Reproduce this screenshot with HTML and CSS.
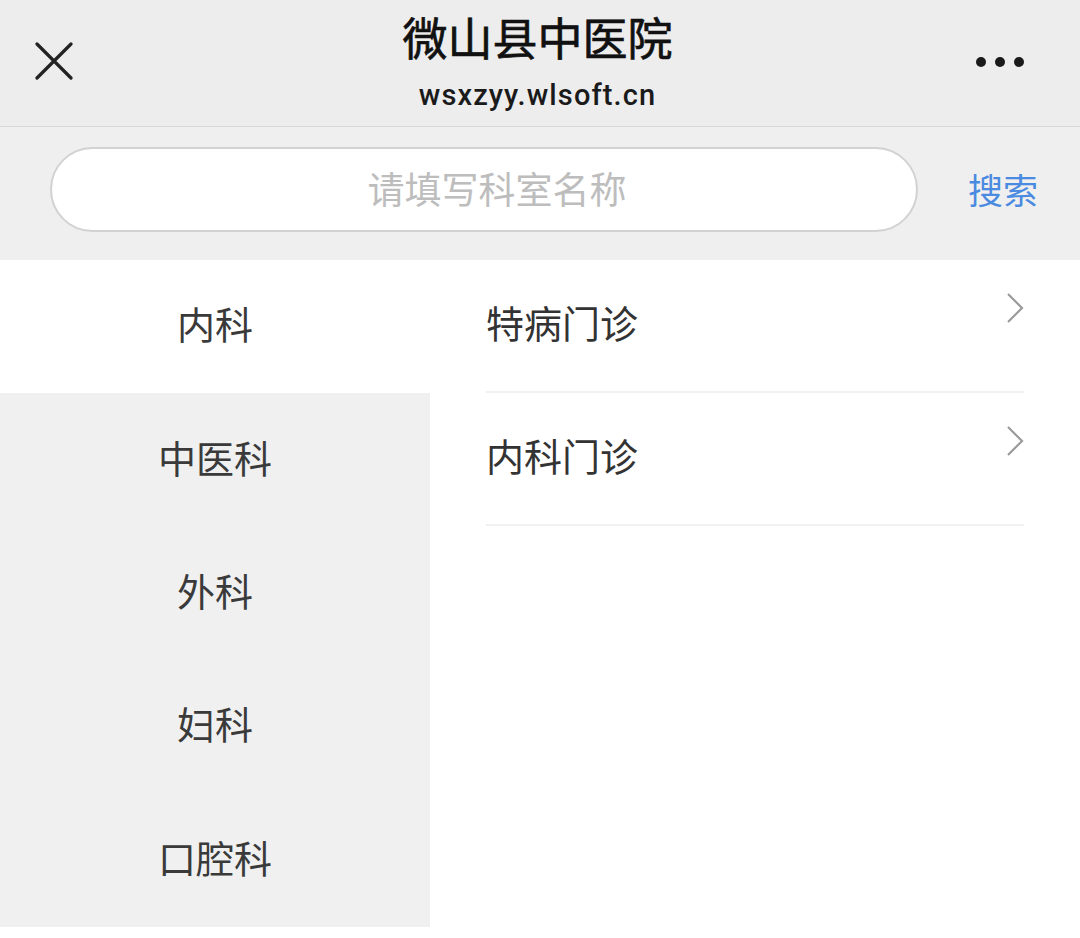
FILE: index.html
```html
<!DOCTYPE html>
<html lang="zh-CN">
<head>
<meta charset="utf-8">
<title>微山县中医院</title>
<link rel="stylesheet" href="styles.css">
</head>
<body>
<div class="page">
  <header class="topbar">
    <div class="close">
      <svg width="38" height="38" viewBox="0 0 38 38"><path d="M2 2 L36 36 M36 2 L2 36" stroke="#222" stroke-width="3.2" fill="none" stroke-linecap="round"/></svg>
    </div>
    <div class="titles">
      <div class="title">微山县中医院</div>
      <div class="subtitle">wsxzyy.wlsoft.cn</div>
    </div>
    <div class="more"><span class="dot"></span><span class="dot"></span><span class="dot"></span></div>
  </header>

  <div class="searchbar">
    <div class="searchbox"><span class="placeholder">请填写科室名称</span></div>
    <div class="searchbtn">搜索</div>
  </div>

  <div class="content">
    <ul class="depts">
      <li class="dept active">内科</li>
      <li class="dept">中医科</li>
      <li class="dept">外科</li>
      <li class="dept">妇科</li>
      <li class="dept">口腔科</li>
    </ul>
    <ul class="clinics">
      <li class="clinic"><span class="name">特病门诊</span><svg class="chev" width="18" height="32" viewBox="0 0 18 32"><path d="M2 2 L16 16 L2 30" stroke="#9a9a9a" stroke-width="2.2" fill="none"/></svg></li>
      <li class="clinic"><span class="name">内科门诊</span><svg class="chev" width="18" height="32" viewBox="0 0 18 32"><path d="M2 2 L16 16 L2 30" stroke="#9a9a9a" stroke-width="2.2" fill="none"/></svg></li>
    </ul>
  </div>
</div>
</body>
</html>
```

FILE: styles.css
```css
* { box-sizing: border-box; }
html, body { margin: 0; padding: 0; background: #ffffff; }
body {
  font-family: Roboto, "Noto Sans CJK SC", "Noto Sans", sans-serif;
  color: #333;
  width: 1080px;
  height: 938px;
  overflow: hidden;
}
ul { list-style: none; margin: 0; padding: 0; }

.topbar {
  height: 127px;
  background: #ededed;
  border-bottom: 1px solid #d8d8d8;
  display: flex;
  align-items: flex-start;
  justify-content: space-between;
  padding: 0 56px 0 35px;
}
.close { margin-top: 42px; width: 38px; height: 38px; }
.close svg { display: block; }
.titles {
  display: flex;
  flex-direction: column;
  align-items: center;
  padding-top: 10px;
  margin-left: 26px;
}
.title {
  font-family: "Noto Sans CJK SC", sans-serif;
  font-size: 45px;
  line-height: 54px;
  font-weight: 400;
  color: #111;
  -webkit-text-stroke: 0.7px #111;
}
.subtitle {
  margin-top: 14px;
  font-family: Roboto, "Noto Sans", sans-serif;
  font-size: 29px;
  line-height: 34px;
  font-weight: 500;
  color: #1a1a1a;
  letter-spacing: 1.1px;
}
.more {
  margin-top: 57px;
  display: flex;
  gap: 9px;
}
.dot { width: 10px; height: 10px; border-radius: 50%; background: #1a1a1a; display: block; }

.searchbar {
  height: 133px;
  background: #efefef;
  display: flex;
  align-items: flex-start;
  padding: 20px 0 0 50px;
}
.searchbox {
  width: 868px;
  height: 85px;
  background: #fff;
  border: 2px solid #d2d2d2;
  border-radius: 43px;
  display: flex;
  align-items: center;
  justify-content: center;
  padding: 0 0 4px 26px;
}
.placeholder {
  font-family: "Noto Sans CJK SC", sans-serif;
  font-size: 37px;
  color: #bdbdbd;
}
.searchbtn {
  margin: 20px 0 0 50px;
  font-family: "Noto Sans CJK SC", sans-serif;
  font-size: 35px;
  line-height: 44px;
  color: #4a8ae0;
}

.content {
  display: grid;
  grid-template-columns: 430px 1fr;
}
.depts { background: #f0f0f0; }
.dept {
  height: 133.4px;
  display: flex;
  align-items: center;
  justify-content: center;
  padding-bottom: 8px;
  font-family: "Noto Sans CJK SC", sans-serif;
  font-size: 38px;
  color: #3a3a3a;
}
.dept.active { background: #fff; }

.clinics { padding: 0 56px 0 56px; }
.clinic {
  height: 133px;
  border-bottom: 2px solid #f1f1f1;
  display: flex;
  align-items: center;
  justify-content: space-between;
  padding-bottom: 8px;
  font-family: "Noto Sans CJK SC", sans-serif;
  font-size: 38px;
  color: #333;
}
.chev { align-self: flex-start; margin-top: 32px; }
```
